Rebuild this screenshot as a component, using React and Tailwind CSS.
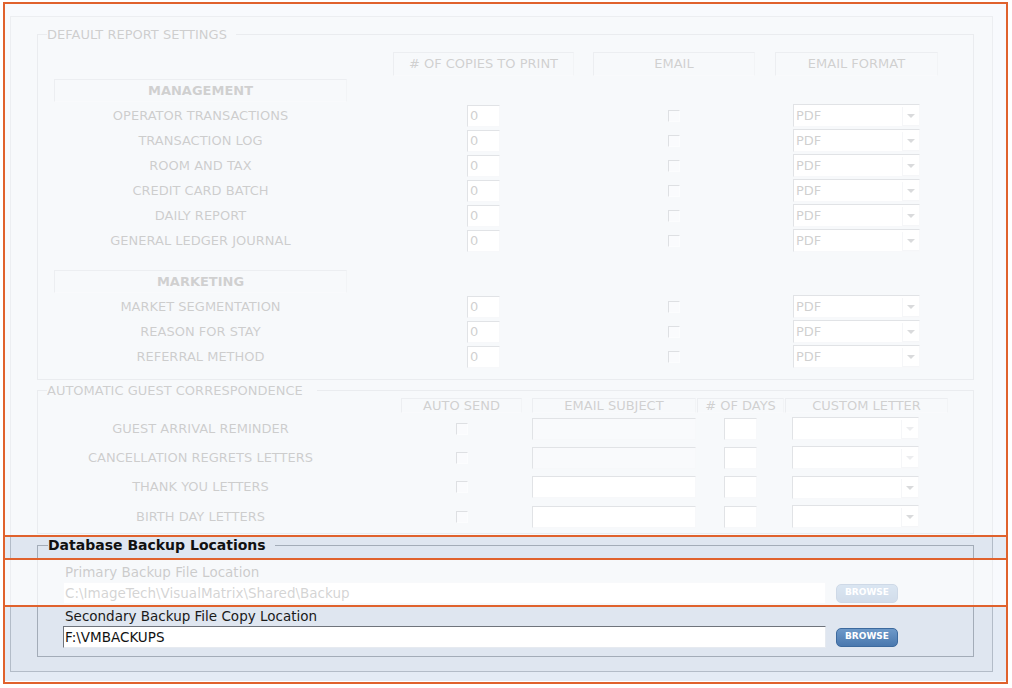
import React from 'react'

const management = ['OPERATOR TRANSACTIONS', 'TRANSACTION LOG', 'ROOM AND TAX', 'CREDIT CARD BATCH', 'DAILY REPORT', 'GENERAL LEDGER JOURNAL']
const marketing = ['MARKET SEGMENTATION', 'REASON FOR STAY', 'REFERRAL METHOD']
const letters = ['GUEST ARRIVAL REMINDER', 'CANCELLATION REGRETS LETTERS', 'THANK YOU LETTERS', 'BIRTH DAY LETTERS']

function Chk() {
  return <div className="w-[12px] h-[12px] border border-t-[#7c8490] border-l-[#7c8490] border-r-[#f2f5f9] border-b-[#f2f5f9] bg-[#e9eef5]" />
}

function Num({ value = '' }) {
  return (
    <div className="w-[33px] h-[22px] bg-white border border-t-[#868e9a] border-l-[#868e9a] border-r-[#dde2ea] border-b-[#dde2ea] pl-[2px] leading-[20px] text-[#444]">
      {value}
    </div>
  )
}

function Select({ value = '', disabled = false }) {
  return (
    <div className="w-[127px] h-[23px] flex bg-white border border-t-[#868e9a] border-l-[#868e9a] border-r-[#dde2ea] border-b-[#dde2ea]">
      <span className="flex-1 pl-[2px] leading-[21px] text-[#444]">{value}</span>
      <span className="w-[17px] flex items-center justify-center border-l border-b border-[#d5dbe3] mt-[2px]">
        <svg width="8" height="4" viewBox="0 0 8 4">
          <path d="M0 0h8L4 4z" fill={disabled ? '#b4b8be' : '#6a6e74'} />
        </svg>
      </span>
    </div>
  )
}

function Head({ className, children }) {
  return (
    <div className={`border border-t-[#b3bbc6] border-l-[#b3bbc6] border-r-[#cbd2db] border-b-[#e6ebf2] text-center text-[#444] ${className}`}>
      {children}
    </div>
  )
}

function ReportRow({ label }) {
  return (
    <div className="flex items-center h-[25px]">
      <div className="w-[293px] text-center text-[#3a3a3a]">{label}</div>
      <div className="ml-[46px] w-[181px] flex justify-center"><Num value="0" /></div>
      <div className="ml-[19px] w-[162px] flex justify-center"><Chk /></div>
      <div className="ml-[20px] w-[163px] flex justify-center"><Select value="PDF" /></div>
    </div>
  )
}

function LetterRow({ label, disabled }) {
  return (
    <div className="flex items-center h-[29.3px]">
      <div className="w-[293px] text-center text-[#3a3a3a]">{label}</div>
      <div className="ml-[54px] w-[121px] flex justify-center"><Chk /></div>
      <div className="ml-[10px] w-[164px]">
        <div className={`w-[164px] h-[22px] border border-t-[#868e9a] border-l-[#868e9a] border-r-[#dde2ea] border-b-[#dde2ea] ${disabled ? 'bg-[#e8ecf1]' : 'bg-white'}`} />
      </div>
      <div className="ml-[1px] w-[87px] flex justify-center"><Num /></div>
      <div className="ml-[1px] w-[163px] pl-[7px]"><Select disabled={disabled} /></div>
    </div>
  )
}

function Browse() {
  return (
    <div className="ml-[10px] w-[62px] h-[19px] rounded-[5px] border border-[#3d6a9e] bg-linear-to-b from-[#6d99c9] to-[#4a78ae] text-white text-[9px] font-bold flex items-center justify-center">
      BROWSE
    </div>
  )
}

export default function App() {
  return (
    <div className="relative w-[1012px] h-[688px] bg-white overflow-hidden pl-[5px] pt-[4px] font-['DejaVu_Sans',sans-serif] text-[13px] text-[#333]">
      <div className="w-[1001px] h-[677px] bg-[#e4ebf5] pl-[5px] pt-[12px]">
        <div className="w-[983px] h-[656px] border border-[#b3bcc8] bg-[#dfe6f0] pt-[10px] pl-[26px] pr-[18px]">
          {/* default report settings */}
          <fieldset className="border border-[#aab3bf] pb-[10px]">
            <legend className="ml-[9px] pr-[9px] leading-[15px] text-[#3c3c3c]">DEFAULT REPORT SETTINGS</legend>
            <div className="pl-[16px]">
              <div className="flex mt-[10px] h-[24px]">
                <div className="w-[293px]" />
                <Head className="ml-[46px] w-[181px] leading-[22px]"># OF COPIES TO PRINT</Head>
                <Head className="ml-[19px] w-[162px] leading-[22px]">EMAIL</Head>
                <Head className="ml-[20px] w-[163px] leading-[22px]">EMAIL FORMAT</Head>
              </div>
              <Head className="mt-[3px] w-[293px] h-[23px] leading-[21px] font-bold text-[#333]">MANAGEMENT</Head>
              <div className="mt-[1px]">
                {management.map(l => <ReportRow key={l} label={l} />)}
              </div>
              <Head className="mt-[17px] w-[293px] h-[23px] leading-[21px] font-bold text-[#333]">MARKETING</Head>
              <div className="mt-[1px]">
                {marketing.map(l => <ReportRow key={l} label={l} />)}
              </div>
            </div>
          </fieldset>

          {/* automatic guest correspondence */}
          <fieldset className="mt-[3px] border border-[#aab3bf] pb-[2px]">
            <legend className="ml-[9px] pr-[14px] leading-[15px] text-[#3c3c3c]">AUTOMATIC GUEST CORRESPONDENCE</legend>
            <div className="pl-[16px]">
              <div className="flex h-[15px]">
                <div className="w-[293px]" />
                <Head className="ml-[54px] w-[121px] leading-[13px]">AUTO SEND</Head>
                <Head className="ml-[10px] w-[164px] leading-[13px]">EMAIL SUBJECT</Head>
                <Head className="ml-[1px] w-[87px] leading-[13px]"># OF DAYS</Head>
                <Head className="ml-[1px] w-[163px] leading-[13px]">CUSTOM LETTER</Head>
              </div>
              <div className="mt-[1px]">
                {letters.map((l, i) => <LetterRow key={l} label={l} disabled={i < 2} />)}
              </div>
            </div>
          </fieldset>

          {/* database backup */}
          <fieldset className="mt-[4px] border border-[#a3acb8] pb-[8px] text-[13.5px]">
            <legend className="ml-[10px] pr-[9px] leading-[15px] text-[14px] font-bold text-[#111]">Database Backup Locations</legend>
            <div className="pl-[25px]">
              <div className="mt-[11px] pl-[2px] leading-[16px] text-[#333]">Primary Backup File Location</div>
              <div className="mt-[2px] flex items-center">
                <div className="w-[763px] h-[22px] bg-white border border-[#e3e7ed] pl-[1px] leading-[20px] text-[#555]">
                  C:\ImageTech\VisualMatrix\Shared\Backup
                </div>
                <Browse />
              </div>
              <div className="mt-[4px] pl-[2px] leading-[16px] text-[#1a1a1a]">Secondary Backup File Copy Location</div>
              <div className="mt-[2px] flex items-center">
                <div className="w-[763px] h-[22px] bg-white border border-t-[#6f747c] border-l-[#6f747c] border-r-[#e6eaf0] border-b-[#e6eaf0] pl-[1px] leading-[20px] text-[#111]">
                  F:\VMBACKUPS
                </div>
                <Browse />
              </div>
            </div>
          </fieldset>
        </div>
      </div>

      {/* faded areas of the screenshot */}
      <div className="absolute left-0 top-0 w-full h-[536px] bg-white/75" />
      <div className="absolute left-0 top-[559px] w-full h-[47px] bg-white/75" />

      {/* orange highlight outlines */}
      <div className="absolute left-[3px] top-[2px] w-[1005px] h-[682px] border-2 border-[#e0622d]" />
      <div className="absolute left-[3px] top-[535px] w-[1005px] h-[2px] bg-[#e0622d]" />
      <div className="absolute left-[3px] top-[558px] w-[1005px] h-[2px] bg-[#e0622d]" />
      <div className="absolute left-[3px] top-[605px] w-[1005px] h-[2px] bg-[#e0622d]" />
    </div>
  )
}
